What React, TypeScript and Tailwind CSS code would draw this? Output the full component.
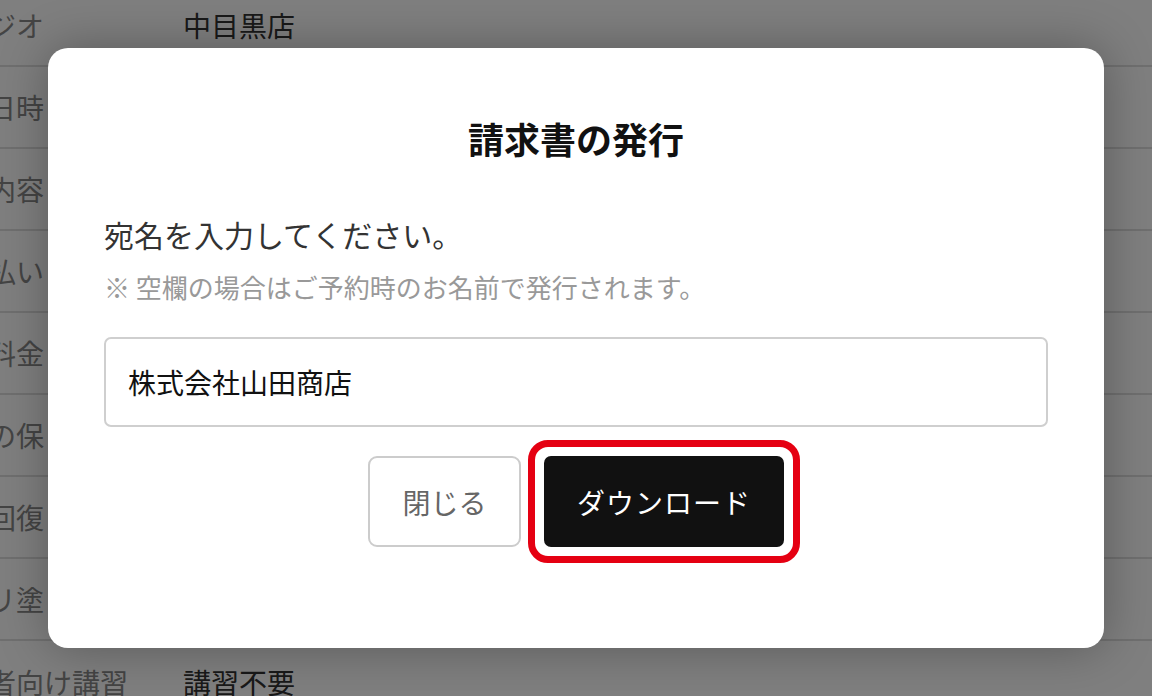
import React from 'react';

const rows: { label: string; value?: string }[] = [
  { label: 'スタジオ', value: '中目黒店' },
  { label: '予約日時' },
  { label: '予約内容' },
  { label: 'お支払い' },
  { label: '利用料金' },
  { label: '荷物の保' },
  { label: '原状回復' },
  { label: '壁紙リ塗' },
  { label: '初心者向け講習', value: '講習不要' },
];

const font = { fontFamily: '"Noto Sans CJK JP", "Noto Sans", sans-serif' };

export default function App() {
  return (
    <div
      className="relative w-[1152px] h-[696px] overflow-hidden bg-white"
      style={font}
    >
      {/* Page behind the dialog */}
      <div className="-mt-[15px] -ml-[68px] w-[1220px]">
        {rows.map((row, i) => (
          <div
            key={row.label}
            className={
              'flex items-center h-[82px] text-[28px] leading-[28px] ' +
              (i < rows.length - 1 ? 'border-b-2 border-[#dedede]' : '')
            }
          >
            <div className="w-[251px] shrink-0 whitespace-nowrap text-[#888]">{row.label}</div>
            <div className="text-[#333]">{row.value}</div>
          </div>
        ))}
      </div>

      {/* Overlay */}
      <div className="absolute inset-0 bg-black/50 flex items-center justify-center">
        <div className="w-[1056px] h-[600px] bg-white rounded-[20px] shadow-[0_0_50px_rgba(0,0,0,0.3)] px-14 pt-[72px] flex flex-col">
          <h2 className="text-center text-[36px] leading-[36px] font-bold text-[#111]">
            請求書の発行
          </h2>

          <p className="mt-[63px] text-[30px] leading-[30px] text-[#333]">
            宛名を入力してください。
          </p>
          <p className="mt-[25px] text-[26px] leading-[26px] text-[#999]">
            ※ 空欄の場合はご予約時のお名前で発行されます。
          </p>

          <div className="mt-[37px] h-[90px] border-2 border-[#cfcfcf] rounded-[7px] flex items-center px-[22px]">
            <span className="text-[28px] leading-[28px] text-[#111]">株式会社山田商店</span>
          </div>

          <div className="mt-[29px] flex justify-center gap-[23px]">
            <button className="w-[153px] h-[91px] border-2 border-[#cccccc] rounded-[9px] text-[28px] text-[#666] bg-white">
              閉じる
            </button>
            <div className="relative">
              <button className="w-[240px] h-[91px] rounded-[7px] bg-[#111111] text-white text-[28px] tracking-[1px]">
                ダウンロード
              </button>
              <span className="pointer-events-none absolute -inset-[16px] border-[7px] border-[#e50012] rounded-[20px]" />
            </div>
          </div>
        </div>
      </div>
    </div>
  );
}
